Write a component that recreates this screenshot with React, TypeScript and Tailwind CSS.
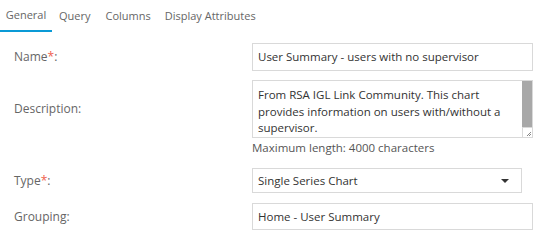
export default function App() {
  const font = { fontFamily: '"Open Sans", "Noto Sans", sans-serif' };
  return (
    <div className="w-[555px] h-[248px] bg-white text-[12px] text-[#333]" style={font}>
      <div className="flex h-[32px] items-end text-[11px] text-[#666]">
        <div className="w-[52px] h-[32px] flex items-center justify-center border-b-2 border-[#0a9ad6]">General</div>
        <div className="h-[32px] flex items-center pl-[7px] pr-[15px]">Query</div>
        <div className="h-[32px] flex items-center pr-[14px]">Columns</div>
        <div className="h-[32px] flex items-center">Display Attributes</div>
      </div>

      <div className="flex items-center mt-[11px] h-[28px]">
        <div className="w-[252px] pl-[14px] text-[#666]">
          Name<span className="text-[#f0604d]">*</span>:
        </div>
        <div className="w-[281px] h-[28px] border border-[#d9d9d9] px-[5px] flex items-center text-[11.5px]">
          User Summary - users with no supervisor
        </div>
      </div>

      <div className="flex mt-[9px]">
        <div className="w-[252px] pl-[14px] text-[#666] h-[58px] flex items-center">Description:</div>
        <div className="flex flex-col">
          <div className="relative w-[281px] h-[58px] border border-[#d9d9d9] pl-[5px] pr-[14px] pt-[6px] leading-[16.5px] text-[11.5px]">
            From RSA IGL Link Community. This chart provides information on users with/without a supervisor.
            <div className="absolute right-0 top-0 bottom-0 w-[10px] flex flex-col">
              <div className="h-[46px] bg-[#a8a8a8]"></div>
              <div className="flex-1 bg-white"></div>
              <div className="h-[10px] border-t border-l border-[#d9d9d9] relative">
                <svg width="9" height="9" viewBox="0 0 9 9" className="absolute right-0 bottom-0">
                  <path d="M8 4 L4 8 M8 6 L6 8" stroke="#888" strokeWidth="1" />
                </svg>
              </div>
            </div>
          </div>
          <div className="mt-[1px] leading-[17px] text-[#555] text-[11.5px]">Maximum length: 4000 characters</div>
        </div>
      </div>

      <div className="flex items-center mt-[12px] h-[25px]">
        <div className="w-[252px] pl-[14px] text-[#666]">
          Type<span className="text-[#f0604d]">*</span>:
        </div>
        <div className="w-[270px] h-[25px] border border-[#d9d9d9] px-[5px] flex items-center justify-between text-[11.5px]">
          <span>Single Series Chart</span>
          <svg width="10" height="6" viewBox="0 0 10 6" className="mr-[6px]">
            <path d="M1 1 L9 1 L5 5 Z" fill="#333" />
          </svg>
        </div>
      </div>

      <div className="flex items-center mt-[10px] h-[27px]">
        <div className="w-[252px] pl-[14px] text-[#666]">Grouping:</div>
        <div className="w-[281px] h-[27px] border border-[#d9d9d9] px-[5px] flex items-center text-[11.5px]">
          Home - User Summary
        </div>
      </div>
    </div>
  );
}
